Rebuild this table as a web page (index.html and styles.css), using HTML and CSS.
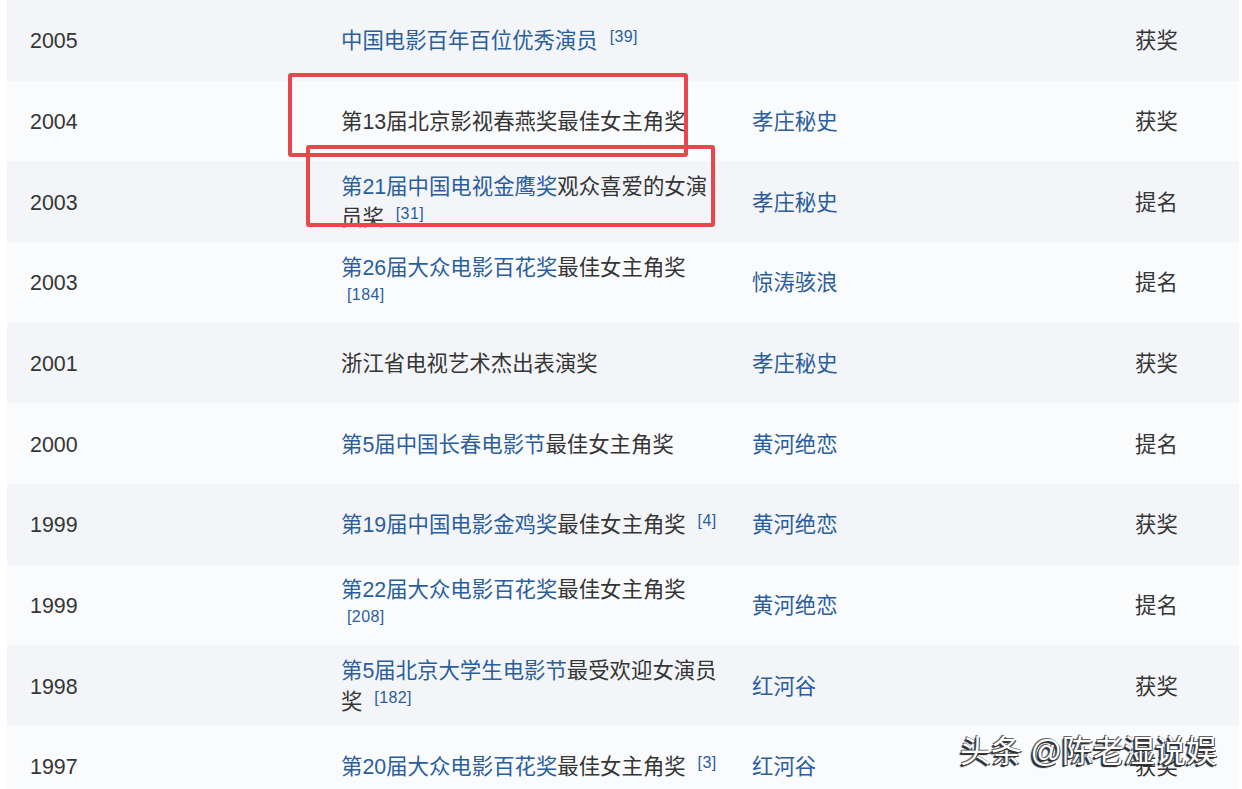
FILE: index.html
```html
<!DOCTYPE html>
<html lang="zh-CN">
<head>
    <meta charset="UTF-8">
    <meta name="viewport" content="width=device-width, initial-scale=1.0">
    <title>获奖记录</title>
    <link rel="stylesheet" href="styles.css">
</head>
<body>
    <div class="awards">
        <div class="row">
            <div class="year">2005</div>
            <div class="name"><a href="#">中国电影百年百位优秀演员</a> <sup>[39]</sup></div>
            <div class="work"></div>
            <div class="result">获奖</div>
        </div>
        <div class="row">
            <div class="year">2004</div>
            <div class="name">第13届北京影视春燕奖最佳女主角奖</div>
            <div class="work"><a href="#">孝庄秘史</a></div>
            <div class="result">获奖</div>
        </div>
        <div class="row">
            <div class="year">2003</div>
            <div class="name"><a href="#">第21届中国电视金鹰奖</a>观众喜爱的女演员奖 <sup>[31]</sup></div>
            <div class="work"><a href="#">孝庄秘史</a></div>
            <div class="result">提名</div>
        </div>
        <div class="row">
            <div class="year">2003</div>
            <div class="name"><a href="#">第26届大众电影百花奖</a>最佳女主角奖 <sup>[184]</sup></div>
            <div class="work"><a href="#">惊涛骇浪</a></div>
            <div class="result">提名</div>
        </div>
        <div class="row">
            <div class="year">2001</div>
            <div class="name">浙江省电视艺术杰出表演奖</div>
            <div class="work"><a href="#">孝庄秘史</a></div>
            <div class="result">获奖</div>
        </div>
        <div class="row">
            <div class="year">2000</div>
            <div class="name"><a href="#">第5届中国长春电影节</a>最佳女主角奖</div>
            <div class="work"><a href="#">黄河绝恋</a></div>
            <div class="result">提名</div>
        </div>
        <div class="row">
            <div class="year">1999</div>
            <div class="name"><a href="#">第19届中国电影金鸡奖</a>最佳女主角奖 <sup>[4]</sup></div>
            <div class="work"><a href="#">黄河绝恋</a></div>
            <div class="result">获奖</div>
        </div>
        <div class="row">
            <div class="year">1999</div>
            <div class="name"><a href="#">第22届大众电影百花奖</a>最佳女主角奖 <sup>[208]</sup></div>
            <div class="work"><a href="#">黄河绝恋</a></div>
            <div class="result">提名</div>
        </div>
        <div class="row">
            <div class="year">1998</div>
            <div class="name"><a href="#">第5届北京大学生电影节</a>最受欢迎女演员奖 <sup>[182]</sup></div>
            <div class="work"><a href="#">红河谷</a></div>
            <div class="result">获奖</div>
        </div>
        <div class="row">
            <div class="year">1997</div>
            <div class="name"><a href="#">第20届大众电影百花奖</a>最佳女主角奖 <sup>[3]</sup></div>
            <div class="work"><a href="#">红河谷</a></div>
            <div class="result">获奖</div>
        </div>
    </div>

    <!-- 红框标注 -->
    <div class="mark mark-first"></div>
    <div class="mark mark-second"></div>

    <div class="watermark">头条 @陈老湿说娱</div>
</body>
</html>
```

FILE: styles.css
```css
/* CSS */
body {
    margin: 0;
    background-color: #fff;
    font-family: "Liberation Sans", "Noto Sans CJK SC", sans-serif;
    font-size: 21.4px;
    color: #353535;
    position: relative;
    overflow: hidden;
    height: 789px;
}
.awards {
    margin-left: 7px;
    margin-right: 3px;
}
.row {
    display: grid;
    grid-template-columns: 334px 411px 383px 1fr;
    align-items: center;
    height: 80.67px;
    line-height: 31px;
    padding-top: 3px;
    box-sizing: border-box;
    background-color: #fafbfd;
}
.row:nth-child(odd) {
    background-color: #f3f5f8;
}
.year {
    padding-left: 23px;
}
.name {
    padding-right: 29px;
}
a {
    color: #2b5e9c;
    text-decoration: none;
}
sup {
    font-size: 16px;
    letter-spacing: 0.4px;
    color: #2b5e9c;
    line-height: 0;
    vertical-align: 6px;
    padding-left: 6px;
}
.mark {
    position: absolute;
    border: 4px solid #e8474b;
    border-radius: 3px;
    box-sizing: border-box;
}
.mark-first {
    left: 288px;
    top: 73px;
    width: 400px;
    height: 84px;
}
.mark-second {
    left: 306px;
    top: 145px;
    width: 409px;
    height: 82px;
}
.watermark {
    position: absolute;
    left: 960px;
    top: 735px;
    font-size: 31px;
    line-height: 34px;
    color: #fff;
    white-space: nowrap;
    text-shadow: -1px 1px 0 #333, 1px 1px 0 #444, -1px -1px 0 #666, -2px 2px 1px #222;
}
```
